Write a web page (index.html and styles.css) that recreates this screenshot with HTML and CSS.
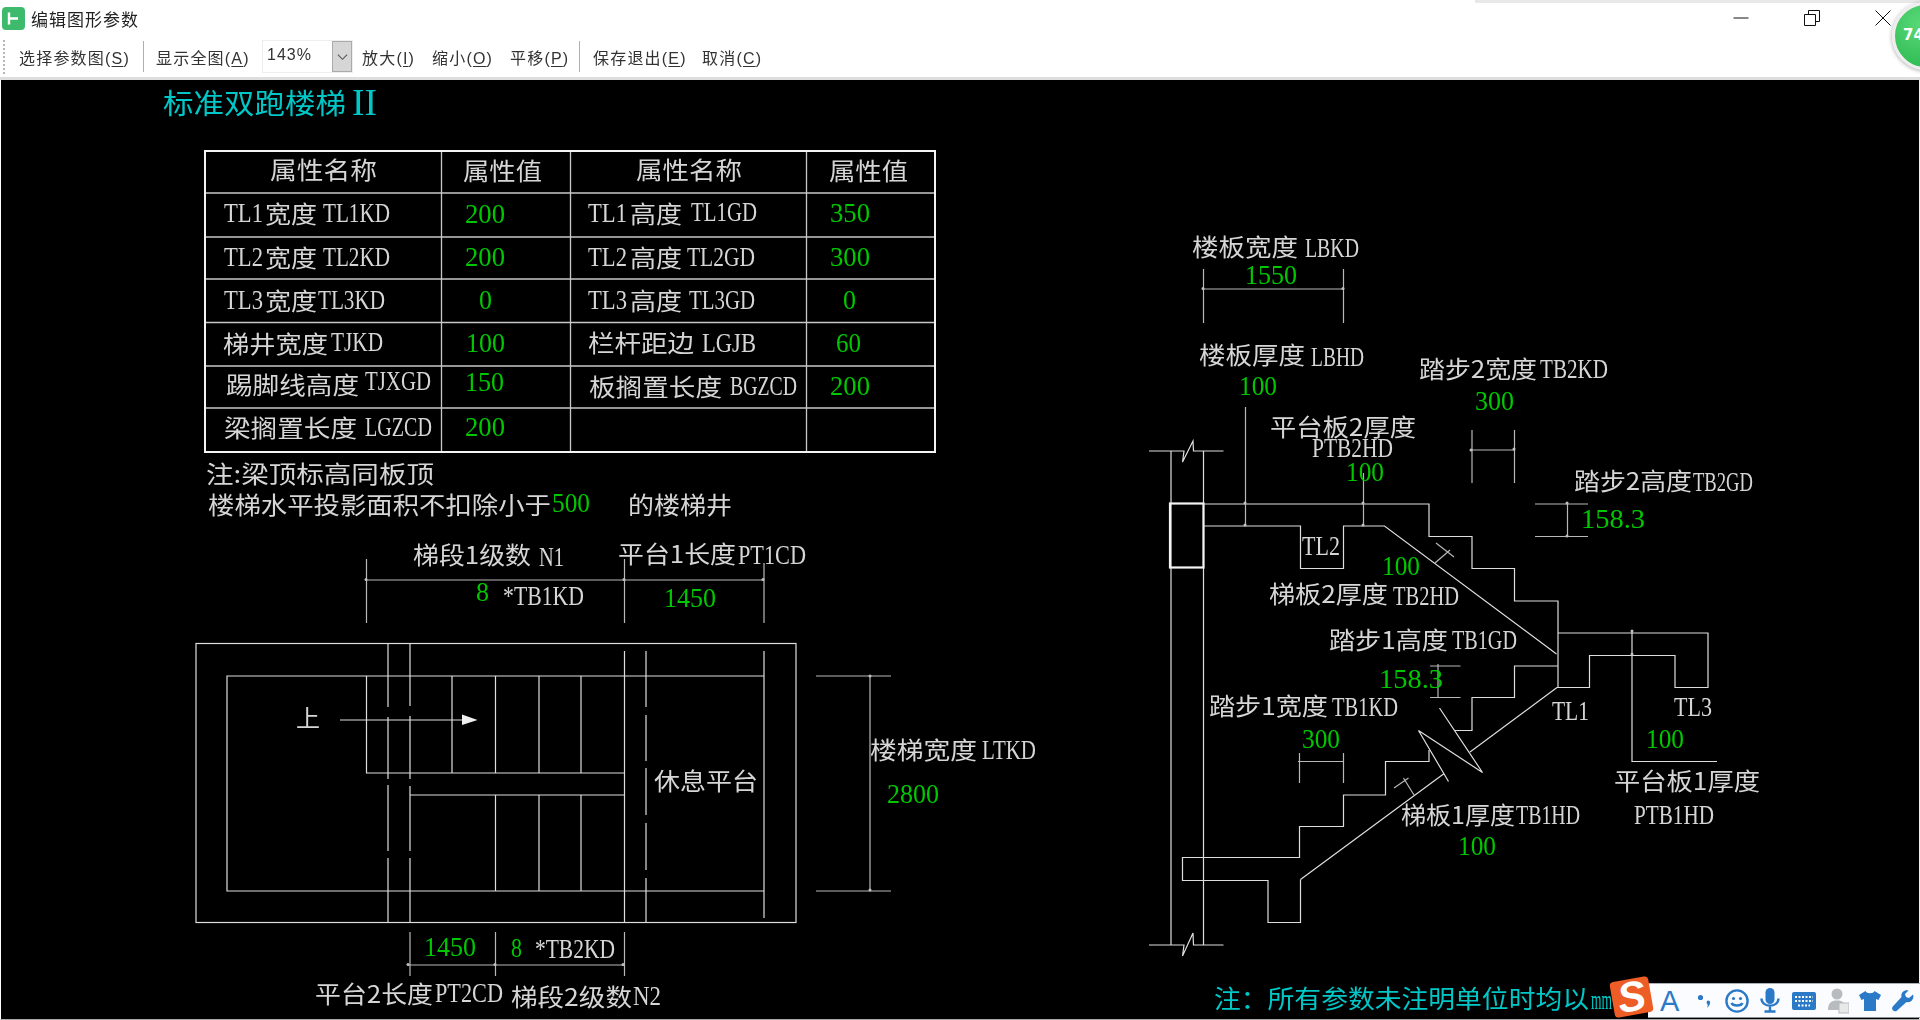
FILE: index.html
```html
<!DOCTYPE html>
<html lang="zh-CN">
<head>
<meta charset="utf-8">
<title>编辑图形参数</title>
<link rel="stylesheet" href="styles.css">
</head>
<body>
<div class="window">
  <div class="topstrip"></div>
  <header class="titlebar">
    <svg class="appicon" viewBox="0 0 23 23"><rect width="23" height="23" rx="4" class="appicon-bg"/><path d="M7 5.5V17.5M7 11.5H16" class="appicon-fg"/></svg>
    <span class="apptitle">编辑图形参数</span>
    <div class="winctrls">
      <svg viewBox="0 0 16 16"><path d="M0.5 8H15.5"/></svg>
      <svg viewBox="0 0 16 16"><path d="M0.5 4.5H11.5V15.5H0.5ZM4.5 4.5V0.5H15.5V11.5H11.5"/></svg>
      <svg viewBox="0 0 16 16"><path d="M0.5 0.5L15.5 15.5M15.5 0.5L0.5 15.5"/></svg>
    </div>
  </header>
  <nav class="toolbar">
    <span class="grip"></span>
    <span class="tool t-select">选择参数图(<u>S</u>)</span>
    <span class="sep s1"></span>
    <span class="tool t-all">显示全图(<u>A</u>)</span>
    <span class="combo"><span class="combo-val">143%</span><span class="combo-btn"><svg viewBox="0 0 12 8"><path d="M1 1.5L6 6.5L11 1.5"/></svg></span></span>
    <span class="tool t-in">放大(<u>I</u>)</span>
    <span class="tool t-out">缩小(<u>O</u>)</span>
    <span class="tool t-pan">平移(<u>P</u>)</span>
    <span class="sep s2"></span>
    <span class="tool t-save">保存退出(<u>E</u>)</span>
    <span class="tool t-cancel">取消(<u>C</u>)</span>
  </nav>
  <main class="canvas">
    <svg class="cad" viewBox="1 80 1918 939" width="1918" height="939">
      <!-- heading -->
      <text x="163" y="114" textLength="183" lengthAdjust="spacingAndGlyphs" class="cj c big">标准双跑楼梯</text>
      <text x="352" y="115" textLength="25" lengthAdjust="spacingAndGlyphs" class="la c big">II</text>

      <!-- parameter table -->
      <path class="tb" d="M205 193H935M205 237H935M205 279H935M205 322.5H935M205 366H935M205 408H935M441.5 151V452M570.5 151V452M806.5 151V452"/>
      <rect class="tbo" x="205" y="151" width="730" height="301"/>
      <text x="270" y="179" textLength="107" lengthAdjust="spacingAndGlyphs" class="cj w">属性名称</text>
      <text x="463" y="180" textLength="79" lengthAdjust="spacingAndGlyphs" class="cj w">属性值</text>
      <text x="636" y="179" textLength="106" lengthAdjust="spacingAndGlyphs" class="cj w">属性名称</text>
      <text x="829" y="180" textLength="79" lengthAdjust="spacingAndGlyphs" class="cj w">属性值</text>

      <text x="224" y="222" textLength="39" lengthAdjust="spacingAndGlyphs" class="la w">TL1</text>
      <text x="265" y="223" textLength="52" lengthAdjust="spacingAndGlyphs" class="cj w">宽度</text>
      <text x="323" y="222" textLength="67" lengthAdjust="spacingAndGlyphs" class="la w">TL1KD</text>
      <text x="465" y="223" textLength="40" lengthAdjust="spacingAndGlyphs" class="la g">200</text>
      <text x="588" y="222" textLength="39" lengthAdjust="spacingAndGlyphs" class="la w">TL1</text>
      <text x="630" y="223" textLength="52" lengthAdjust="spacingAndGlyphs" class="cj w">高度</text>
      <text x="691" y="221" textLength="66" lengthAdjust="spacingAndGlyphs" class="la w">TL1GD</text>
      <text x="830" y="222" textLength="40" lengthAdjust="spacingAndGlyphs" class="la g">350</text>

      <text x="224" y="266" textLength="39" lengthAdjust="spacingAndGlyphs" class="la w">TL2</text>
      <text x="265" y="267" textLength="52" lengthAdjust="spacingAndGlyphs" class="cj w">宽度</text>
      <text x="323" y="266" textLength="67" lengthAdjust="spacingAndGlyphs" class="la w">TL2KD</text>
      <text x="465" y="266" textLength="40" lengthAdjust="spacingAndGlyphs" class="la g">200</text>
      <text x="588" y="266" textLength="39" lengthAdjust="spacingAndGlyphs" class="la w">TL2</text>
      <text x="630" y="267" textLength="52" lengthAdjust="spacingAndGlyphs" class="cj w">高度</text>
      <text x="687" y="266" textLength="68" lengthAdjust="spacingAndGlyphs" class="la w">TL2GD</text>
      <text x="830" y="266" textLength="40" lengthAdjust="spacingAndGlyphs" class="la g">300</text>

      <text x="224" y="309" textLength="39" lengthAdjust="spacingAndGlyphs" class="la w">TL3</text>
      <text x="265" y="310" textLength="52" lengthAdjust="spacingAndGlyphs" class="cj w">宽度</text>
      <text x="318" y="309" textLength="67" lengthAdjust="spacingAndGlyphs" class="la w">TL3KD</text>
      <text x="479" y="309" textLength="13" lengthAdjust="spacingAndGlyphs" class="la g">0</text>
      <text x="588" y="309" textLength="39" lengthAdjust="spacingAndGlyphs" class="la w">TL3</text>
      <text x="630" y="310" textLength="52" lengthAdjust="spacingAndGlyphs" class="cj w">高度</text>
      <text x="689" y="309" textLength="66" lengthAdjust="spacingAndGlyphs" class="la w">TL3GD</text>
      <text x="843" y="309" textLength="13" lengthAdjust="spacingAndGlyphs" class="la g">0</text>

      <text x="223" y="353" textLength="105" lengthAdjust="spacingAndGlyphs" class="cj w">梯井宽度</text>
      <text x="331" y="351" textLength="52" lengthAdjust="spacingAndGlyphs" class="la w">TJKD</text>
      <text x="466" y="352" textLength="39" lengthAdjust="spacingAndGlyphs" class="la g">100</text>
      <text x="588" y="352" textLength="106" lengthAdjust="spacingAndGlyphs" class="cj w">栏杆距边</text>
      <text x="702" y="352" textLength="54" lengthAdjust="spacingAndGlyphs" class="la w">LGJB</text>
      <text x="836" y="352" textLength="25" lengthAdjust="spacingAndGlyphs" class="la g">60</text>

      <text x="226" y="394" textLength="133" lengthAdjust="spacingAndGlyphs" class="cj w">踢脚线高度</text>
      <text x="365" y="390" textLength="66" lengthAdjust="spacingAndGlyphs" class="la w">TJXGD</text>
      <text x="465" y="391" textLength="39" lengthAdjust="spacingAndGlyphs" class="la g">150</text>
      <text x="589" y="396" textLength="133" lengthAdjust="spacingAndGlyphs" class="cj w">板搁置长度</text>
      <text x="730" y="395" textLength="67" lengthAdjust="spacingAndGlyphs" class="la w">BGZCD</text>
      <text x="830" y="395" textLength="40" lengthAdjust="spacingAndGlyphs" class="la g">200</text>

      <text x="224" y="437" textLength="133" lengthAdjust="spacingAndGlyphs" class="cj w">梁搁置长度</text>
      <text x="365" y="436" textLength="67" lengthAdjust="spacingAndGlyphs" class="la w">LGZCD</text>
      <text x="465" y="436" textLength="40" lengthAdjust="spacingAndGlyphs" class="la g">200</text>

      <text x="206" y="483" textLength="228" lengthAdjust="spacingAndGlyphs" class="cj w">注:梁顶标高同板顶</text>
      <text x="208" y="514" textLength="343" lengthAdjust="spacingAndGlyphs" class="cj w">楼梯水平投影面积不扣除小于</text>
      <text x="552" y="512" textLength="38" lengthAdjust="spacingAndGlyphs" class="la g">500</text>
      <text x="628" y="514" textLength="104" lengthAdjust="spacingAndGlyphs" class="cj w">的楼梯井</text>

      <!-- stair plan -->
      <rect class="ln" x="196" y="643.5" width="600" height="279"/>
      <path class="ln" d="M764 676H227V891H764M764 651V918"/>
      <path class="ln" d="M388 643V707M388 717V779M388 785V851M388 858V922M410 643V706M410 716V779M410 786V851M410 858V922"/>
      <path class="ln" d="M624.5 651V922M646 651V707M646 715V761M646 768V815M646 823V870M646 878V922"/>
      <path class="ln" d="M366.5 676V773H624M452 676V773M495.5 676V773M539 676V773M581 676V773"/>
      <path class="ln" d="M410 795H624M495.5 795V891M539 795V891M581 795V891"/>
      <path class="ln" d="M340 720H466"/>
      <path class="fill" d="M462 714.5L477.5 720L462 725Z"/>
      <text x="296" y="727" textLength="24" lengthAdjust="spacingAndGlyphs" class="cj w">上</text>
      <path class="dm" d="M366.5 559V623M624.5 559V623M764 563V623M366 580H764"/>
      <path class="dm" d="M816 676H891M816 891H891M870 676V891"/>
      <path class="dm" d="M410 932V976M495.5 932V976M624.5 932V976M408 965H624"/>
      <circle class="dot" cx="366" cy="579.5" r="1.5"/><circle class="dot" cx="624" cy="579.5" r="1.5"/><circle class="dot" cx="763" cy="579.5" r="1.5"/>
      <circle class="dot" cx="870" cy="676" r="1.5"/><circle class="dot" cx="870" cy="890" r="1.5"/>
      <circle class="dot" cx="408" cy="964.5" r="1.5"/><circle class="dot" cx="495" cy="964.5" r="1.5"/><circle class="dot" cx="623" cy="964.5" r="1.5"/>

      <text x="413" y="564" textLength="118" lengthAdjust="spacingAndGlyphs" class="cj w">梯段1级数</text>
      <text x="539" y="566" textLength="25" lengthAdjust="spacingAndGlyphs" class="la w">N1</text>
      <text x="618" y="563" textLength="118" lengthAdjust="spacingAndGlyphs" class="cj w">平台1长度</text>
      <text x="738" y="564" textLength="68" lengthAdjust="spacingAndGlyphs" class="la w">PT1CD</text>
      <text x="476" y="601" textLength="13" lengthAdjust="spacingAndGlyphs" class="la g">8</text>
      <text x="503" y="605" textLength="81" lengthAdjust="spacingAndGlyphs" class="la w">*TB1KD</text>
      <text x="664" y="607" textLength="52" lengthAdjust="spacingAndGlyphs" class="la g">1450</text>
      <text x="654" y="790" textLength="104" lengthAdjust="spacingAndGlyphs" class="cj w">休息平台</text>
      <text x="870" y="759" textLength="107" lengthAdjust="spacingAndGlyphs" class="cj w">楼梯宽度</text>
      <text x="982" y="759" textLength="54" lengthAdjust="spacingAndGlyphs" class="la w">LTKD</text>
      <text x="887" y="803" textLength="52" lengthAdjust="spacingAndGlyphs" class="la g">2800</text>
      <text x="424" y="956" textLength="52" lengthAdjust="spacingAndGlyphs" class="la g">1450</text>
      <text x="511" y="957" textLength="11" lengthAdjust="spacingAndGlyphs" class="la g">8</text>
      <text x="535" y="958" textLength="80" lengthAdjust="spacingAndGlyphs" class="la w">*TB2KD</text>
      <text x="315" y="1003" textLength="118" lengthAdjust="spacingAndGlyphs" class="cj w">平台2长度</text>
      <text x="435" y="1002" textLength="68" lengthAdjust="spacingAndGlyphs" class="la w">PT2CD</text>
      <text x="511" y="1006" textLength="121" lengthAdjust="spacingAndGlyphs" class="cj w">梯段2级数</text>
      <text x="633" y="1005" textLength="28" lengthAdjust="spacingAndGlyphs" class="la w">N2</text>

      <!-- stair section -->
      <path class="ln" d="M1149 451H1184L1182.5 462L1193 441L1193.5 451H1223.5"/>
      <path class="ln" d="M1149 945H1184L1182.5 956L1193 933L1193.5 945H1223.5"/>
      <path class="ln" d="M1171 451V945M1203.5 451V945"/>
      <rect class="thick" x="1170" y="503.5" width="33.5" height="64"/>
      <path class="ln" d="M1203.5 504H1429V536.5H1472V568.5H1514.5V601H1558V687.5"/>
      <path class="ln" d="M1203.5 526H1300.5V568.5H1343.5V526H1384.5L1556.5 654"/>
      <path class="ln" d="M1558 633H1708V687.5H1675V655.5H1589.5V687.5H1557"/>
      <path class="ln" d="M1558 666H1514.5V697.5H1472V730.5H1455M1557 687.5L1470 752M1439.5 708L1482.5 772.5L1418.5 730.5L1448.5 781.5M1443.5 774L1300.5 879.5"/>
      <path class="ln" d="M1429 750V761.5H1385.5V795H1343.5V826.5H1299.5V857.5H1182.5V880.5H1268V922.5H1300.5V879.5"/>
      <path class="dm" d="M1203.5 269V323M1343.5 269V323M1202 289H1343"/>
      <path class="dm" d="M1245.5 407V526M1363.5 473V526"/>
      <path class="dm" d="M1472 430V483M1514.5 430V483M1470 450H1514"/>
      <path class="dm" d="M1535 504H1588M1535 536.5H1588M1567.5 502V536"/>
      <path class="dm" d="M1435 563L1450 550M1436 543L1454 557"/>
      <path class="dm" d="M1430 666H1460.5M1430 697.5H1460.5M1438 664V697"/>
      <path class="dm" d="M1299.5 753V783M1343.5 753V783M1298 761.5H1343"/>
      <path class="dm" d="M1403.5 778L1414 795M1394 788L1408.5 778"/>
      <path class="ln" d="M1632 630V761.5H1717"/>
      <circle class="dot" cx="1203" cy="288.5" r="1.5"/><circle class="dot" cx="1343" cy="288.5" r="1.5"/>
      <circle class="dot" cx="1245" cy="503" r="1.5"/><circle class="dot" cx="1245" cy="525" r="1.5"/>
      <circle class="dot" cx="1363" cy="503" r="1.5"/><circle class="dot" cx="1363" cy="525" r="1.5"/>
      <circle class="dot" cx="1471" cy="450" r="1.5"/><circle class="dot" cx="1514" cy="449" r="1.5"/>
      <circle class="dot" cx="1567" cy="503" r="1.5"/><circle class="dot" cx="1567" cy="536" r="1.5"/>
      <circle class="dot" cx="1632" cy="631" r="1.5"/><circle class="dot" cx="1632" cy="654" r="1.5"/>

      <text x="1192" y="256" textLength="106" lengthAdjust="spacingAndGlyphs" class="cj w">楼板宽度</text>
      <text x="1305" y="257" textLength="54" lengthAdjust="spacingAndGlyphs" class="la w">LBKD</text>
      <text x="1245" y="284" textLength="52" lengthAdjust="spacingAndGlyphs" class="la g">1550</text>
      <text x="1199" y="364" textLength="106" lengthAdjust="spacingAndGlyphs" class="cj w">楼板厚度</text>
      <text x="1311" y="366" textLength="53" lengthAdjust="spacingAndGlyphs" class="la w">LBHD</text>
      <text x="1239" y="395" textLength="38" lengthAdjust="spacingAndGlyphs" class="la g">100</text>
      <text x="1419" y="378" textLength="118" lengthAdjust="spacingAndGlyphs" class="cj w">踏步2宽度</text>
      <text x="1540" y="378" textLength="68" lengthAdjust="spacingAndGlyphs" class="la w">TB2KD</text>
      <text x="1475" y="410" textLength="39" lengthAdjust="spacingAndGlyphs" class="la g">300</text>
      <text x="1270" y="436" textLength="146" lengthAdjust="spacingAndGlyphs" class="cj w">平台板2厚度</text>
      <text x="1312" y="457" textLength="81" lengthAdjust="spacingAndGlyphs" class="la w">PTB2HD</text>
      <text x="1346" y="481" textLength="38" lengthAdjust="spacingAndGlyphs" class="la g">100</text>
      <text x="1574" y="490" textLength="118" lengthAdjust="spacingAndGlyphs" class="cj w">踏步2高度</text>
      <text x="1693" y="491" textLength="60" lengthAdjust="spacingAndGlyphs" class="la w">TB2GD</text>
      <text x="1581" y="528" textLength="64" lengthAdjust="spacingAndGlyphs" class="la g">158.3</text>
      <text x="1302" y="555" textLength="38" lengthAdjust="spacingAndGlyphs" class="la w">TL2</text>
      <text x="1382" y="575" textLength="38" lengthAdjust="spacingAndGlyphs" class="la g">100</text>
      <text x="1269" y="603" textLength="119" lengthAdjust="spacingAndGlyphs" class="cj w">梯板2厚度</text>
      <text x="1393" y="605" textLength="66" lengthAdjust="spacingAndGlyphs" class="la w">TB2HD</text>
      <text x="1329" y="649" textLength="119" lengthAdjust="spacingAndGlyphs" class="cj w">踏步1高度</text>
      <text x="1452" y="649" textLength="65" lengthAdjust="spacingAndGlyphs" class="la w">TB1GD</text>
      <text x="1379" y="688" textLength="64" lengthAdjust="spacingAndGlyphs" class="la g">158.3</text>
      <text x="1209" y="715" textLength="119" lengthAdjust="spacingAndGlyphs" class="cj w">踏步1宽度</text>
      <text x="1332" y="716" textLength="66" lengthAdjust="spacingAndGlyphs" class="la w">TB1KD</text>
      <text x="1302" y="748" textLength="38" lengthAdjust="spacingAndGlyphs" class="la g">300</text>
      <text x="1552" y="720" textLength="37" lengthAdjust="spacingAndGlyphs" class="la w">TL1</text>
      <text x="1674" y="716" textLength="38" lengthAdjust="spacingAndGlyphs" class="la w">TL3</text>
      <text x="1646" y="748" textLength="38" lengthAdjust="spacingAndGlyphs" class="la g">100</text>
      <text x="1614" y="790" textLength="146" lengthAdjust="spacingAndGlyphs" class="cj w">平台板1厚度</text>
      <text x="1634" y="824" textLength="80" lengthAdjust="spacingAndGlyphs" class="la w">PTB1HD</text>
      <text x="1401" y="824" textLength="114" lengthAdjust="spacingAndGlyphs" class="cj w">梯板1厚度</text>
      <text x="1516" y="824" textLength="64" lengthAdjust="spacingAndGlyphs" class="la w">TB1HD</text>
      <text x="1458" y="855" textLength="38" lengthAdjust="spacingAndGlyphs" class="la g">100</text>
      <text x="1214" y="1008" textLength="375" lengthAdjust="spacingAndGlyphs" class="cj c">注：所有参数未注明单位时均以</text>
      <text x="1591" y="1009" textLength="21" lengthAdjust="spacingAndGlyphs" class="la c">mm</text>
    </svg>
  </main>
</div>

<div class="ball"><span>74</span></div>

<aside class="ime">
  <span class="ime-logo"><span>S</span></span>
  <span class="ime-a">A</span>
  <svg class="ime-i i-punct" viewBox="0 0 14 16"><circle cx="3.5" cy="4.5" r="2.6"/><path d="M11 7.5c1.8 0 2.4 1.2 2 3-.4 1.7-1.5 3.2-2.8 4.3.5-1.5.6-2.6.3-3.6-1.4-.8-1-3.7.5-3.7z"/></svg>
  <svg class="ime-i i-smile" viewBox="0 0 24 24"><circle cx="12" cy="12" r="10.6" class="o"/><circle cx="8.5" cy="9.5" r="1.6"/><circle cx="15.5" cy="9.5" r="1.6"/><path d="M6.5 14c1.5 3.4 9.500 3.400 11 0" class="o"/></svg>
  <svg class="ime-i i-mic" viewBox="0 0 20 25"><rect x="5.500" y="0" width="9" height="16" rx="4.500"/><path d="M1.500 10.500c0 9.500 17 9.500 17 0M10 18.500V23M4.500 23.500H15.500" class="o"/></svg>
  <svg class="ime-i i-kbd" viewBox="0 0 24 18"><rect width="24" height="18" rx="2"/><path d="M3 5H21M3 9H21M6 13.500H18" class="k"/></svg>
  <svg class="ime-i i-user" viewBox="0 0 21 26"><circle cx="9" cy="6" r="5.500"/><path d="M0 22c0-7 3-9.500 9-9.500s9 2.500 9 9.500z"/><rect x="11" y="15" width="10" height="10" class="b"/></svg>
  <svg class="ime-i i-shirt" viewBox="0 0 22 20"><path d="M6.500 0L0 4l2.500 5L5 8v12h12V8l2.500 1L22 4 15.500 0c-1 3-8 3-9 0z"/></svg>
  <svg class="ime-i i-wrench" viewBox="0 0 22 22"><path d="M21 4.500l-4 3.500-3-1-1-3L16.500.5C12.500-.8 8.500 2.500 9.500 7L.8 16.500c-1.300 1.500-.6 3.300.3 4.100 1 .9 2.800 1.100 4-.2L14.500 12c4.500 1.200 8-3 6.500-7.500z"/></svg>
</aside>
```

FILE: styles.css
```css
* { box-sizing: border-box; }
html, body { margin: 0; padding: 0; background: #fff; overflow: hidden; }
body { width: 1920px; height: 1020px; position: relative; font-family: "Liberation Sans", "Noto Sans CJK SC", sans-serif; }

.window { display: flex; flex-direction: column; height: 1020px; filter: blur(0.4px); }
.topstrip { position: absolute; top: 0; left: 1475px; width: 445px; height: 3px; background: #e8e8e8; }

.titlebar { height: 36px; display: flex; align-items: center; padding-left: 2px; flex: none; }
.appicon { width: 23px; height: 23px; }
.appicon-bg { fill: #3dba6c; }
.appicon-fg { fill: none; stroke: #fff; stroke-width: 2.4; }
.apptitle { margin-left: 6px; font-size: 17px; letter-spacing: 1px; color: #222; }
.winctrls { margin-left: auto; display: flex; gap: 55px; padding-right: 29px; align-items: center; }
.winctrls svg { width: 16px; height: 16px; fill: none; stroke: #111; stroke-width: 1; }

.toolbar { height: 44px; display: flex; align-items: center; flex: none; border-bottom: 3px solid #dedede; font-size: 16px; color: #333; }
.grip { width: 2px; height: 34px; margin-left: 3px; border-left: 2px dotted #b5b5b5; }
.tool { white-space: nowrap; letter-spacing: 1.2px; }
.tool u { text-underline-offset: 2px; }
.t-select { margin-left: 14px; width: 113px; }
.sep { width: 1px; height: 31px; background: #b0b0b0; }
.s1 { margin-left: 11px; }
.t-all { margin-left: 12px; width: 95px; }
.combo { margin-left: 11px; width: 91px; height: 33px; display: flex; background: #fff; border: 1px solid #eee; font-size: 16px; letter-spacing: 1px; }
.combo-val { flex: 1; padding: 5px 0 0 4px; }
.combo-btn { width: 20px; background: #d6d6d6; border: 1px solid #aaa; display: flex; align-items: center; justify-content: center; }
.combo-btn svg { width: 11px; height: 8px; fill: none; stroke: #555; stroke-width: 1.2; }
.t-in { margin-left: 9px; width: 54px; }
.t-out { margin-left: 16px; width: 62px; }
.t-pan { margin-left: 16px; width: 57px; }
.s2 { margin-left: 12px; }
.t-save { margin-left: 13px; width: 93px; }
.t-cancel { margin-left: 16px; width: 59px; }

.canvas { flex: 1; background: #000; border-left: 1px solid #fff; border-right: 1px solid #eee; border-bottom: 1px solid #aaa; overflow: hidden; }
.cad { display: block; }
.cad text { white-space: pre; }
.cj { font-family: "Noto Sans CJK SC", sans-serif; font-size: 24px; }
.la { font-family: "Liberation Serif", serif; font-size: 27px; }
.big.cj { font-size: 28px; }
.big.la { font-size: 38px; }
.w { fill: #d6d6d6; }
.g { fill: #00c800; }
.c { fill: #00c8c8; }
.cj.c:not(.big) { font-size: 25px; }

.ln, .dm, .tb, .tbo, .thick { fill: none; }
.ln { stroke: #dedede; stroke-width: 1.2; }
.dm { stroke: #b8b8b8; stroke-width: 1.2; }
.tb { stroke: #c8c8c8; stroke-width: 1.3; }
.tbo { stroke: #f4f4f4; stroke-width: 2; }
.thick { stroke: #f4f4f4; stroke-width: 2.2; }
.fill { fill: #f0f0f0; }
.dot { fill: #c0c0c0; }

.ball { position: absolute; left: 1892px; top: 2px; width: 68px; height: 68px; border-radius: 50%; background: radial-gradient(circle at 40% 30%, #58d878, #34bf58 70%); border: 3px solid #eee; box-shadow: 0 1px 4px rgba(0,0,0,.35); }
.ball span { position: absolute; left: 8px; top: 21px; font: bold 15px "DejaVu Sans", sans-serif; color: #fff; }

.ime { position: absolute; left: 1648px; top: 983px; width: 272px; height: 35px; background: #fbfcff; border-top: 1px solid #a8b0b8; border-bottom: 1px solid #8a9299; display: flex; align-items: center; color: #2a7ac8; }
.ime-logo { position: absolute; left: -36px; top: -5px; width: 39px; height: 36px; background: #ee5d25; border-radius: 4px; transform: rotate(-10deg); display: flex; align-items: center; justify-content: center; }
.ime-logo span { font: italic bold 42px "Liberation Sans", sans-serif; color: #fff; line-height: 1; }
.ime-a { position: absolute; left: 12px; top: 3px; font: 29px "Liberation Sans", sans-serif; line-height: 1; }
.ime-i { position: absolute; fill: #2a7ac8; }
.ime-i .o { fill: none; stroke: #2a7ac8; stroke-width: 2.4; }
.ime-i .k { fill: none; stroke: #fff; stroke-width: 2; stroke-dasharray: 2 1.500; }
.ime-i .b { fill: #e8e8e8; stroke: #b8bcc0; }
.i-punct { left: 49px; top: 9px; width: 14px; height: 16px; }
.i-smile { left: 77px; top: 5px; width: 24px; height: 24px; }
.i-mic { left: 112px; top: 4px; width: 20px; height: 25px; }
.i-kbd { left: 144px; top: 8px; width: 24px; height: 18px; }
.i-user { left: 180px; top: 4px; width: 21px; height: 26px; fill: #b8bcc0; }
.i-shirt { left: 211px; top: 7px; width: 22px; height: 20px; }
.i-wrench { left: 244px; top: 6px; width: 22px; height: 22px; }
```
